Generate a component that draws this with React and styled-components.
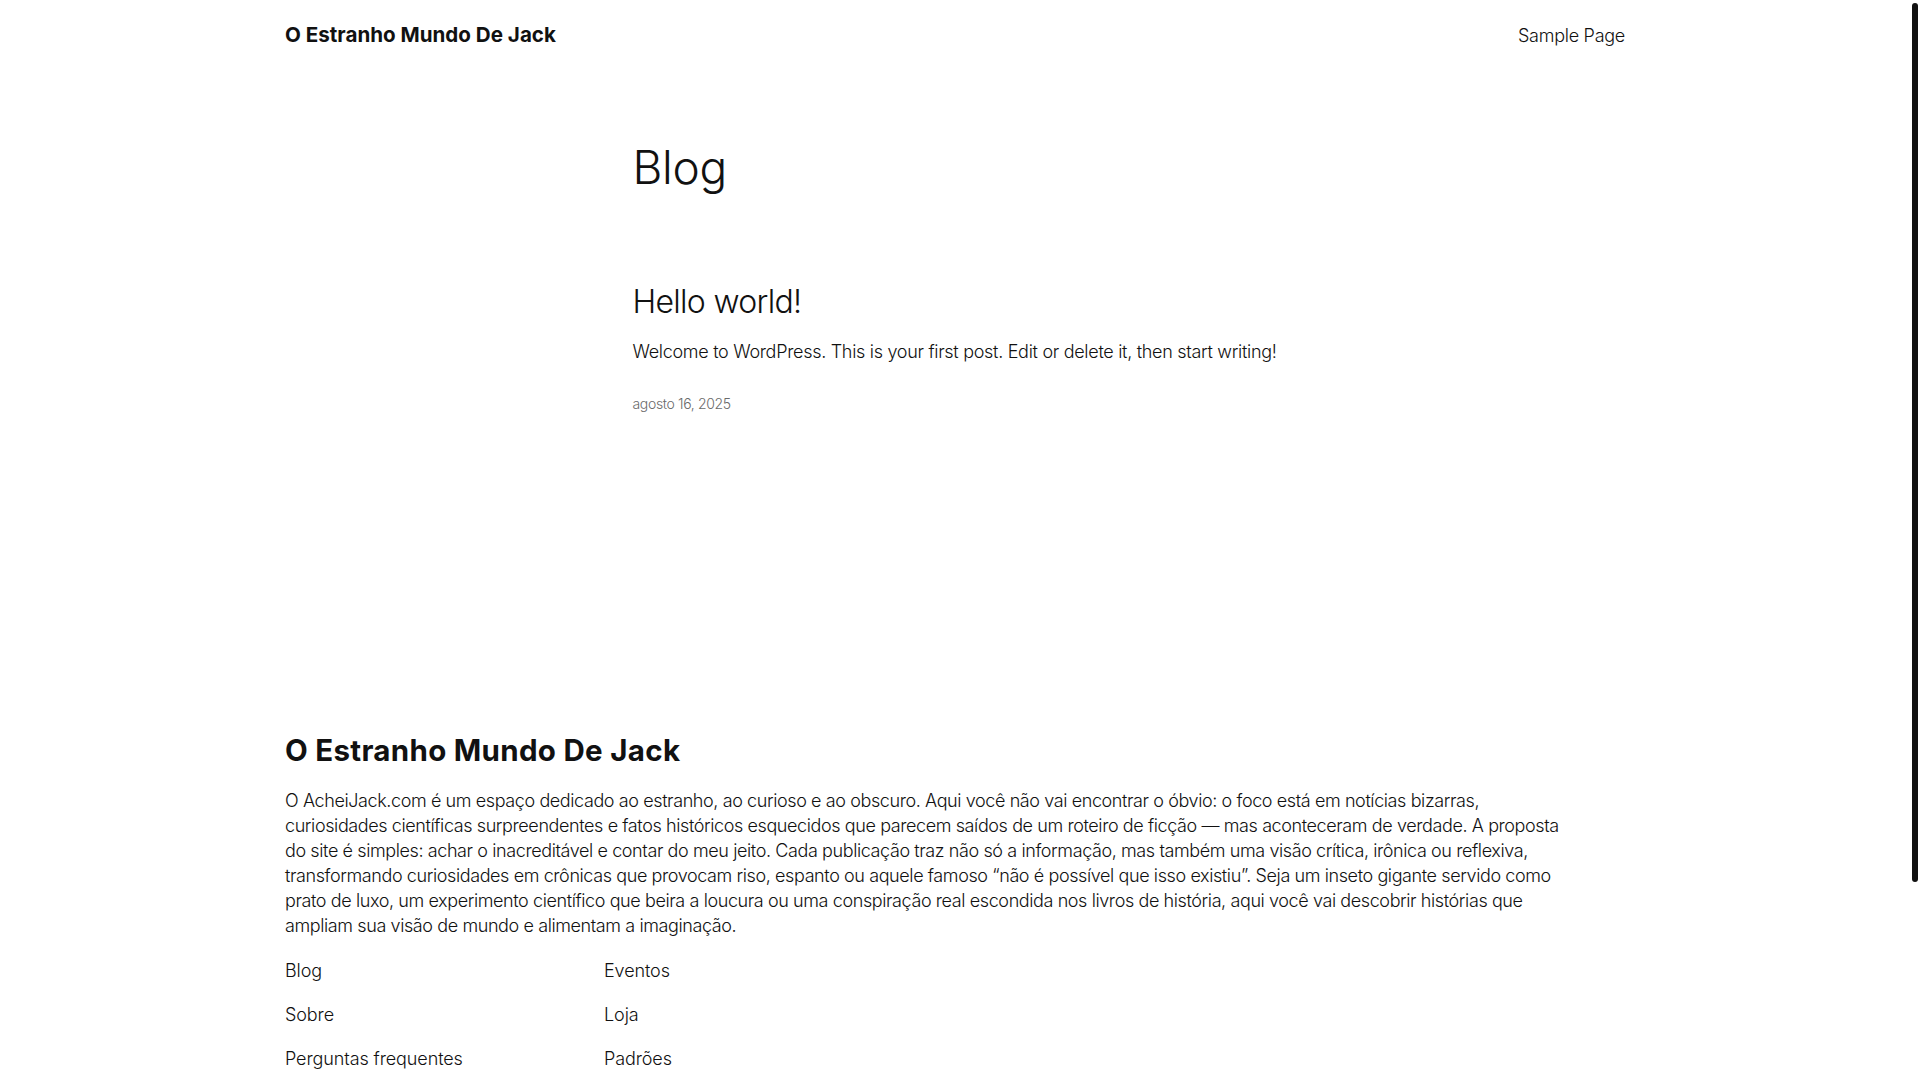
import React from 'react'
import styled, { createGlobalStyle } from 'styled-components'

// page-wide defaults
const GlobalStyle = createGlobalStyle`
  html, body {
    margin: 0;
    padding: 0;
    background: #ffffff;
  }
  body {
    font-family: Inter, "Noto Sans", sans-serif;
    color: #111111;
    -webkit-font-smoothing: antialiased;
  }
  *, *::before, *::after {
    box-sizing: border-box;
  }
  a {
    color: inherit;
    text-decoration: none;
  }
`

const footerLinks = [
  ['Blog', 'Sobre', 'Perguntas frequentes', 'Autores'],
  ['Eventos', 'Loja', 'Padrões', 'Temas'],
]

const aboutLines = [
  'O AcheiJack.com é um espaço dedicado ao estranho, ao curioso e ao obscuro. Aqui você não vai encontrar o óbvio: o foco está em notícias bizarras,',
  'curiosidades científicas surpreendentes e fatos históricos esquecidos que parecem saídos de um roteiro de ficção — mas aconteceram de verdade. A proposta',
  'do site é simples: achar o inacreditável e contar do meu jeito. Cada publicação traz não só a informação, mas também uma visão crítica, irônica ou reflexiva,',
  'transformando curiosidades em crônicas que provocam riso, espanto ou aquele famoso “não é possível que isso existiu”. Seja um inseto gigante servido como',
  'prato de luxo, um experimento científico que beira a loucura ou uma conspiração real escondida nos livros de história, aqui você vai descobrir histórias que',
  'ampliam sua visão de mundo e alimentam a imaginação.',
]

const App = () => {
  return (
    <Page>
      <GlobalStyle />
      <Header>
        <Wide>
          <HeaderRow>
            <SiteTitle href="#">O Estranho Mundo De Jack</SiteTitle>
            <Nav>
              <NavLink href="#">Sample Page</NavLink>
            </Nav>
          </HeaderRow>
        </Wide>
      </Header>

      <Main>
        <Content>
          <PageTitle>Blog</PageTitle>
          <Post>
            <PostTitle><a href="#">Hello world!</a></PostTitle>
            <Excerpt>Welcome to WordPress. This is your first post. Edit or delete it, then start writing!</Excerpt>
            <PostDate>agosto 16, 2025</PostDate>
          </Post>
        </Content>
      </Main>

      <Footer>
        <Wide>
          <FooterTitle>O Estranho Mundo De Jack</FooterTitle>
          <About>
            {aboutLines.map((line, i) => (
              <AboutLine key={i}>{line}</AboutLine>
            ))}
          </About>
          <LinkColumns>
            {footerLinks.map((col, i) => (
              <LinkColumn key={i}>
                {col.map((label) => (
                  <FooterLink key={label} href="#">{label}</FooterLink>
                ))}
              </LinkColumn>
            ))}
          </LinkColumns>
          <Credits>
            <span>Twenty Twenty-Five</span>
            <span>Designed with <a href="#">WordPress</a></span>
          </Credits>
        </Wide>
      </Footer>

      <ScrollThumb />
    </Page>
  )
}

//=====================================
//    Styling of the Components
//=====================================

const Page = styled.div`
  width: 100%;
  min-height: 100vh;
  padding-right: 10px;
`;

const Wide = styled.div`
  max-width: 1340px;
  margin: 0 auto;
`;

const Content = styled.div`
  max-width: 645px;
  margin: 0 auto;
`;

const Header = styled.header`
  padding: 21px 0 23px;
`;

const HeaderRow = styled.div`
  display: flex;
  align-items: center;
  justify-content: space-between;
`;

const SiteTitle = styled.a`
  font-size: 20.6px;
  line-height: 28px;
  font-weight: 700;
  letter-spacing: 0;
`;

const Nav = styled.nav`
  display: flex;
  gap: 24px;
`;

const NavLink = styled.a`
  font-size: 18px;
  line-height: 25px;
  font-weight: 300;
  letter-spacing: -0.27px;
`;

const Main = styled.main`
  padding: 68px 0 160px;
`;

const PageTitle = styled.h1`
  margin: 0;
  font-size: 46px;
  line-height: 55px;
  font-weight: 300;
  letter-spacing: -0.3px;
`;

const Post = styled.article`
  margin-top: 88px;
`;

const PostTitle = styled.h2`
  margin: 0;
  font-size: 32px;
  line-height: 38px;
  font-weight: 300;
  letter-spacing: -0.7px;
`;

const Excerpt = styled.p`
  margin: 16px 0 0;
  font-size: 18px;
  line-height: 29px;
  font-weight: 300;
  letter-spacing: -0.3px;
`;

const PostDate = styled.div`
  margin-top: 28px;
  font-size: 14px;
  line-height: 20px;
  font-weight: 300;
  color: #6a6a6a;
  letter-spacing: -0.34px;
`;

const Footer = styled.footer`
  padding: 159px 0 60px;
`;

const FooterTitle = styled.h2`
  margin: 0;
  font-size: 29.5px;
  line-height: 35px;
  font-weight: 700;
  letter-spacing: 0.3px;
`;

const About = styled.p`
  margin: 20px 0 0;
  font-size: 18px;
  line-height: 25px;
  font-weight: 300;
  letter-spacing: -0.4px;
`;

const AboutLine = styled.span`
  display: block;
  white-space: nowrap;
`;

const LinkColumns = styled.div`
  display: flex;
  margin-top: 20px;
`;

const LinkColumn = styled.div`
  display: flex;
  flex-direction: column;
  gap: 19px;
  width: 319px;
`;

const FooterLink = styled.a`
  font-size: 18px;
  line-height: 25px;
  font-weight: 300;
  letter-spacing: -0.1px;
`;

const Credits = styled.div`
  display: flex;
  justify-content: space-between;
  margin-top: 60px;
  font-size: 14px;
  font-weight: 300;
`;

// browser scroll thumb drawn over the page edge
const ScrollThumb = styled.div`
  position: fixed;
  top: 3px;
  right: 2px;
  width: 6px;
  height: 879px;
  border-radius: 3px;
  background: #111111;
`;

export default App;
